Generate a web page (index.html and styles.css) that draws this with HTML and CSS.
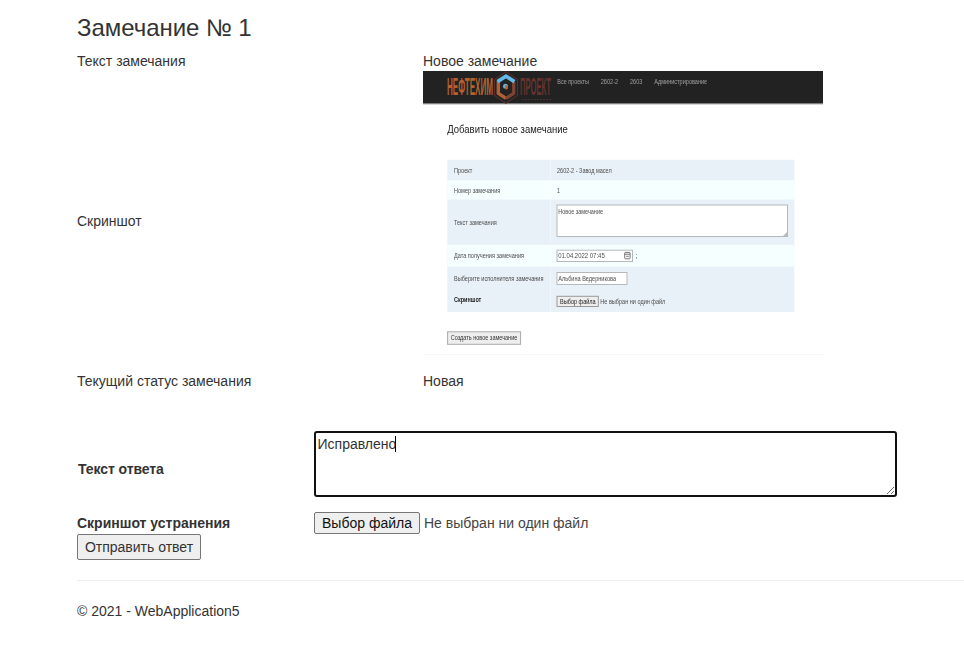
FILE: index.html
```html
<!DOCTYPE html>
<html lang="ru">
<head>
<meta charset="utf-8">
<title>Замечание № 1</title>
<link rel="stylesheet" href="styles.css">
</head>
<body>
<main class="container">
  <h3 class="title">Замечание № 1</h3>
  <dl class="details">
    <dt>Текст замечания</dt>
    <dd>Новое замечание</dd>
    <dt>Скриншот</dt>
    <dd>
      <svg class="shot" width="400" height="300" viewBox="0 0 400 300" role="img" aria-label="Добавить новое замечание">
        <g class="soft">
          <rect width="400" height="32.5" fill="#222"/>
          <rect y="32.3" width="400" height="1" fill="#777"/>
          <text class="logo" transform="translate(24 24) scale(.354 1)" textLength="130" lengthAdjust="spacingAndGlyphs" fill="#b3622f">НЕФТЕХИМ</text>
          <text class="logo" transform="translate(97 24) scale(.31 1)" textLength="100" lengthAdjust="spacingAndGlyphs" fill="#66332e">ПРОЕКТ</text>
          <path d="M83 .8 94.5 8.5V24.5L83 32.2 71.5 24.5V8.5Z" fill="none" stroke="#51302c" stroke-width="1.2"/>
          <path d="M75.3 10V22.4L83 27.4" fill="none" stroke="#b06237" stroke-width="3.4"/>
          <path d="M83 27.4 90.7 22.4V11" fill="none" stroke="#804330" stroke-width="3.2"/>
          <path d="M74.5 10.6 83 5.2 91.5 10.6" fill="none" stroke="#65b9e8" stroke-width="3.8"/>
          <circle cx="82.5" cy="15.3" r="2.5" fill="#6cafd8"/>
          <path d="M82 14.5h3v3L83 19Z" fill="#b86132"/>
          <path d="M99 28.5H128" stroke="#45302e" stroke-dasharray="2 1"/>
          <g fill="#a0a0a0">
            <text x="134.3" y="13.2" textLength="31.7" lengthAdjust="spacingAndGlyphs">Все проекты</text>
            <text x="177.7" y="13.2" textLength="17.5" lengthAdjust="spacingAndGlyphs">2602-2</text>
            <text x="207" y="13.2" textLength="12.3" lengthAdjust="spacingAndGlyphs">2603</text>
            <text x="231.3" y="13.2" textLength="52.9" lengthAdjust="spacingAndGlyphs">Администрирование</text>
          </g>
          <text class="head" x="24.3" y="62" textLength="120.5" lengthAdjust="spacingAndGlyphs">Добавить новое замечание</text>
          <rect x="24.3" y="88.7" width="347" height="152.3" fill="#e9f1f8"/>
          <rect x="24.3" y="109.3" width="347" height="19.2" fill="#f5ffff"/>
          <rect x="24.3" y="173.8" width="347" height="21.8" fill="#f5ffff"/>
          <path d="M127.5 88.7V241" stroke="#fff" stroke-opacity=".4" stroke-width=".7"/>
          <g fill="#4c4c4c">
            <text x="31" y="101.7" textLength="18.3" lengthAdjust="spacingAndGlyphs">Проект</text>
            <text x="134" y="101.7" textLength="54.7" lengthAdjust="spacingAndGlyphs">2602-2 - Завод масел</text>
            <text x="31" y="121.5" textLength="46.3" lengthAdjust="spacingAndGlyphs">Номер замечания</text>
            <text x="134" y="121.5" textLength="3" lengthAdjust="spacingAndGlyphs">1</text>
            <text x="31" y="153.8" textLength="42.7" lengthAdjust="spacingAndGlyphs">Текст замечания</text>
            <text x="31" y="187" textLength="70" lengthAdjust="spacingAndGlyphs">Дата получения замечания</text>
            <text x="31" y="210" textLength="89.5" lengthAdjust="spacingAndGlyphs">Выберите исполнителя замечания</text>
            <text class="strong" x="31" y="231.2" textLength="27.3" lengthAdjust="spacingAndGlyphs">Скриншот</text>
          </g>
          <g fill="#fff" stroke="#b5b8ba">
            <rect x="134" y="134" width="230.5" height="31.5"/>
            <rect x="134" y="179.2" width="75.5" height="11.3"/>
            <rect x="134" y="201.5" width="70" height="12"/>
            <rect x="134" y="225.3" width="41.3" height="10.2" fill="#eee" stroke="#999"/>
            <rect x="24.6" y="260.8" width="73" height="12.5" fill="#eee" stroke="#aaa"/>
          </g>
          <path d="M360 165 364 161V165Z" fill="#bbb"/>
          <g fill="none" stroke="#666" stroke-width=".9">
            <rect x="201.7" y="181.4" width="5.4" height="6.4" rx=".8"/>
            <path d="M201.7 183.2h5.4M203.2 185.3h2.6"/>
          </g>
          <g fill="#4c4c4c">
            <text x="135.3" y="142.6" textLength="44.7" lengthAdjust="spacingAndGlyphs">Новое замечание</text>
            <text x="135.3" y="187" textLength="46.4" lengthAdjust="spacingAndGlyphs">01.04.2022 07:45</text>
            <text x="212.5" y="187">;</text>
            <text x="135.3" y="210" textLength="57.7" lengthAdjust="spacingAndGlyphs">Альбина Ведерникова</text>
            <text x="137" y="232.7" textLength="35.7" lengthAdjust="spacingAndGlyphs" fill="#222">Выбор файла</text>
            <text x="177.3" y="232.7" textLength="65" lengthAdjust="spacingAndGlyphs">Не выбран ни один файл</text>
            <text x="27.7" y="269.3" textLength="66.6" lengthAdjust="spacingAndGlyphs" fill="#333">Создать новое замечание</text>
          </g>
          <path d="M0 283.5H400" stroke="#f4f4f4"/>
        </g>
      </svg>
    </dd>
    <dt>Текущий статус замечания</dt>
    <dd>Новая</dd>
  </dl>
  <form class="reply">
    <div class="row row-text">
      <label for="answer">Текст ответа</label>
      <div class="answer">
        <textarea id="answer">Исправлено</textarea>
        <span class="caret"></span>
      </div>
    </div>
    <div class="row row-file">
      <span class="label">Скриншот устранения</span>
      <div class="file">
        <button type="button" class="pick">Выбор файла</button>
        <span>Не выбран ни один файл</span>
      </div>
    </div>
    <button type="button" class="send">Отправить ответ</button>
  </form>
  <hr>
  <footer>© 2021 - WebApplication5</footer>
</main>
</body>
</html>
```
FILE: styles.css
```css
* { box-sizing: border-box; }
body {
  margin: 0;
  background: #fff;
  color: #333;
  font: 14px/20px "Liberation Sans", Arial, sans-serif;
  overflow: hidden;
}
.container { padding: 15px 0 0 77px; }
.title { margin: 0 0 10px; font-size: 24px; line-height: 26px; font-weight: 400; letter-spacing: -.05px; }
.details {
  display: grid;
  grid-template-columns: 346px 400px;
  align-items: center;
  margin: 0 0 40px;
}
dd { margin: 0; }
.shot { display: block; font-size: 7px; }
.soft { filter: blur(.5px); }
.logo { font-size: 23px; font-weight: 700; }
.head { font-size: 11.5px; fill: #222; }
.strong { font-weight: 700; fill: #222; }
.row {
  display: grid;
  grid-template-columns: 237px 583px;
  align-items: center;
}
.row label, .label { font-weight: 700; }
.row-text { height: 66px; margin-bottom: 15px; }
.row-text label { padding: 10px 0 0 1px; letter-spacing: -.08px; }
.answer { position: relative; height: 66px; }
textarea {
  display: block;
  width: 583px;
  height: 66px;
  margin: 0;
  padding: 1px 1px 1px 1.5px;
  border: 2px solid #101010;
  border-radius: 3px;
  color: #333;
  font: inherit;
  outline: 0;
}
.caret { position: absolute; left: 81px; top: 5px; width: 1px; height: 16px; background: #000; }
.row-file { height: 22px; }
.file { display: flex; align-items: center; gap: 4px; color: #444; }
button {
  display: block;
  margin: 0;
  padding: 0;
  border: 1px solid #767676;
  border-radius: 2px;
  background: #efefef;
  color: #333;
  font: inherit;
  white-space: nowrap;
}
.pick { width: 106px; height: 22px; color: #111; }
.send { width: 124px; height: 26px; }
hr { margin: 20px 0; border: 0; border-top: 1px solid #eee; }
```
